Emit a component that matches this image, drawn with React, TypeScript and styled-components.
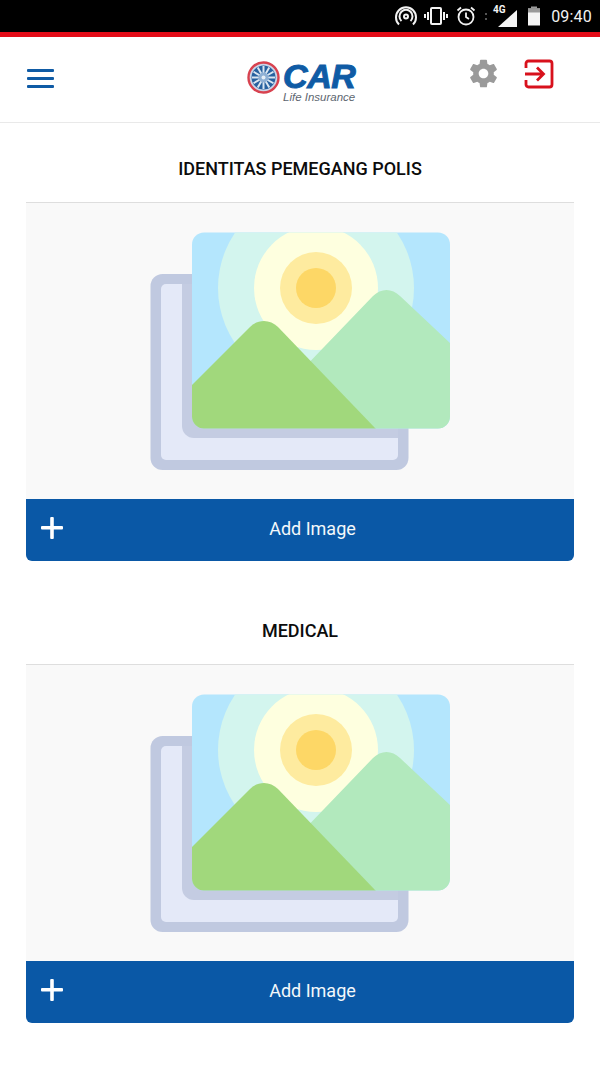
import React from 'react';
import styled, {createGlobalStyle} from 'styled-components';

const GlobalStyle = createGlobalStyle`
html, body {
  margin: 0;
  padding: 0;
  background: #fff;
  font-family: Roboto, "Liberation Sans", sans-serif;
}
* { box-sizing: border-box; }
`
const Page = styled.div`
width: 600px;
height: 1067px;
overflow: hidden;
background: #fff;
`
const StatusBar = styled.div`
height: 32px;
background: #000;
display: flex;
align-items: center;
justify-content: flex-end;
padding-right: 8px;
color: #fff;
`
const StatusTime = styled.span`
font-size: 16px;
letter-spacing: 0.2px;
margin-left: 11px;
color: #f2f2f2;
`
const RedLine = styled.div`
height: 5px;
background: #e30b17;
`
const Header = styled.header`
height: 86px;
display: flex;
align-items: flex-start;
padding: 0 46px 0 27px;
border-bottom: 1px solid #e9e9e9;
`
const Burger = styled.div`
width: 27px;
margin-top: 32px;
display: flex;
flex-direction: column;
gap: 5px;
> span {
  display: block;
  height: 3px;
  background: #0f5ba5;
  border-radius: 1px;
}
`
const Logo = styled.div`
margin-left: 193px;
margin-top: 24px;
display: flex;
align-items: flex-start;
`
const LogoText = styled.div`
margin-left: 3px;
display: flex;
flex-direction: column;
align-items: flex-end;
`
const LogoCar = styled.span`
font-family: "Liberation Sans", sans-serif;
font-style: italic;
font-weight: 700;
font-size: 34px;
line-height: 30px;
color: #0f5ba5;
letter-spacing: -0.5px;
-webkit-text-stroke: 1px #0f5ba5;
`
const LogoSub = styled.span`
font-family: "Liberation Sans", sans-serif;
font-style: italic;
font-size: 11.5px;
line-height: 12px;
color: #5d6670;
`
const Actions = styled.div`
margin-left: auto;
margin-top: 20px;
display: flex;
gap: 24px;
align-items: center;
`
const Section = styled.section`
padding: 0 26px;
height: 462px;
`
const Title = styled.h2`
margin: 0;
height: 80px;
display: flex;
align-items: center;
justify-content: center;
padding-top: 12px;
font-size: 18px;
font-weight: 500;
color: #0c0c0c;
border-bottom: 1px solid #dedede;
`
const Preview = styled.div`
height: 296px;
background: #f9f9f9;
padding-top: 29px;
display: flex;
justify-content: center;
`
const AddButton = styled.div`
height: 62px;
background: #0a58a6;
border-radius: 0 0 6px 6px;
display: flex;
align-items: center;
padding: 0 12px 4px 15px;
color: #fff;
`
const AddLabel = styled.span`
flex: 1;
text-align: center;
font-size: 18px;
color: #f4f8fb;
`

const Wheel = () => (
  <svg width="33" height="33" viewBox="0 0 33 33">
    <circle cx="16.5" cy="16.5" r="15" fill="#c9d6e8" stroke="#d8424f" strokeWidth="2.4"/>
    <circle cx="16.5" cy="16.5" r="12" fill="#27619f"/>
    {[0, 30, 60, 90, 120, 150].map(a => (
      <line key={a} x1="16.5" y1="5" x2="16.5" y2="28" stroke="#dbe6f1" strokeWidth="2" transform={`rotate(${a} 16.5 16.5)`}/>
    ))}
    <circle cx="16.5" cy="16.5" r="5" fill="#8fb0d4"/>
    <circle cx="16.5" cy="16.5" r="2" fill="#e6eef6"/>
  </svg>
)

const Gear = () => (
  <svg width="33" height="33" viewBox="0 0 24 24" fill="#9a9a9a">
    <path d="M19.43 12.98c.04-.32.07-.64.07-.98s-.03-.66-.07-.98l2.11-1.65c.19-.15.24-.42.12-.64l-2-3.46c-.12-.22-.39-.3-.61-.22l-2.49 1c-.52-.4-1.08-.73-1.69-.98l-.38-2.65C14.46 2.18 14.25 2 14 2h-4c-.25 0-.46.18-.49.42l-.38 2.65c-.61.25-1.17.59-1.69.98l-2.49-1c-.23-.09-.49 0-.61.22l-2 3.46c-.13.22-.07.49.12.64l2.11 1.65c-.04.32-.07.65-.07.98s.03.66.07.98l-2.11 1.65c-.19.15-.24.42-.12.64l2 3.46c.12.22.39.3.61.22l2.49-1c.52.4 1.08.73 1.69.98l.38 2.65c.03.24.24.42.49.42h4c.25 0 .46-.18.49-.42l.38-2.65c.61-.25 1.17-.59 1.69-.98l2.49 1c.23.09.49 0 .61-.22l2-3.46c.12-.22.07-.49-.12-.64l-2.11-1.65zM12 15.5c-1.93 0-3.5-1.57-3.5-3.5s1.57-3.5 3.5-3.5 3.5 1.57 3.5 3.5-1.57 3.5-3.5 3.5z"/>
  </svg>
)

const Exit = () => (
  <svg width="30" height="30" viewBox="0 0 30 30" fill="none" stroke="#d8111c" strokeWidth="2.8">
    <path d="M2 9V4.5C2 3 3 2 4.5 2h21C27 2 28 3 28 4.5v21c0 1.5-1 2.500-2.500 2.500h-21C3 28 2 27 2 25.500V21"/>
    <path d="M1 15h18M13 8.500l6.500 6.500-6.500 6.500"/>
  </svg>
)

const Plus = () => (
  <svg width="22" height="22" viewBox="0 0 22 22" fill="#fff">
    <rect x="0" y="9" width="22" height="3.600" rx="1"/>
    <rect x="9.200" y="0" width="3.600" height="22" rx="1"/>
  </svg>
)

const Photos = ({id}: { id: string }) => (
  <svg width="300" height="238" viewBox="150 232 300 238">
    <defs>
      <clipPath id={id}>
        <rect x="192" y="232.500" width="258" height="196" rx="12"/>
      </clipPath>
    </defs>
    <rect x="150.500" y="274" width="258" height="196" rx="12" fill="#c0c9e0"/>
    <rect x="161" y="284" width="237" height="176" rx="5" fill="#e4e9f8"/>
    <path d="M182 284h216v154H194a12 12 0 0 1-12-12z" fill="#c4cce2"/>
    <g clipPath={`url(#${id})`}>
      <rect x="192" y="232" width="258" height="197" fill="#b4e6fd"/>
      <circle cx="316" cy="288" r="98" fill="#d3f5ee"/>
      <circle cx="316" cy="288" r="62" fill="#feffdf"/>
      <circle cx="316" cy="288" r="36" fill="#feeb9f"/>
      <circle cx="316" cy="288" r="20" fill="#fdd766"/>
      <path d="M300 372l73-76c8-8 19-8 27 0l50 47v86H376z" fill="#b2e9bd"/>
      <path d="M192 385l58-58c8-8 20-8 28 0l98 102H192z" fill="#a1d87c"/>
    </g>
  </svg>
)

const StatusIcons = () => (
  <>
    <svg width="22" height="20" viewBox="0 0 22 20" fill="none" stroke="#f2f2f2" strokeWidth="2">
      <circle cx="11" cy="10.500" r="2"/>
      <path d="M6.500 15a6.500 6.500 0 1 1 9 0"/>
      <path d="M4 18.500a10 10 0 1 1 14 0"/>
    </svg>
    <svg style={{marginLeft: 7}} width="24" height="20" viewBox="0 0 24 20" fill="none" stroke="#f2f2f2" strokeWidth="2">
      <rect x="7" y="2" width="10" height="16" rx="1"/>
      <path d="M4 6v8M1 8v4M20 6v8M23 8v4"/>
    </svg>
    <svg style={{marginLeft: 8}} width="20" height="20" viewBox="0 0 20 20" fill="none" stroke="#f2f2f2" strokeWidth="1.800">
      <circle cx="10" cy="11" r="7.500"/>
      <path d="M10 6.500V11l3 2M1.500 4.500L5 1.500M18.500 4.500L15 1.500"/>
    </svg>
    <svg style={{marginLeft: 9}} width="36" height="24" viewBox="0 0 36 24">
      <rect x="0" y="9" width="2" height="2" fill="#555"/>
      <rect x="0" y="14" width="2" height="2" fill="#555"/>
      <path d="M32 6v17H13z" fill="#f4f4f4"/>
      <text x="8" y="9" fontFamily="Roboto, sans-serif" fontWeight="700" fontSize="10" fill="#f4f4f4">4G</text>
    </svg>
    <svg style={{marginLeft: 7}} width="12" height="20" viewBox="0 0 12 20">
      <rect x="0" y="2.500" width="12" height="17" fill="#f4f4f4"/>
      <rect x="3" y="0.500" width="6" height="2" fill="#999"/>
      <rect x="0" y="2.500" width="12" height="4" fill="#999"/>
    </svg>
  </>
)

function PhotoSection({title, id}: { title: string, id: string }) {
  return (
    <Section>
      <Title>{title}</Title>
      <Preview><Photos id={id}/></Preview>
      <AddButton>
        <Plus/>
        <AddLabel>Add Image</AddLabel>
      </AddButton>
    </Section>
  )
}

export default function App() {
  return (
    <Page>
      <GlobalStyle/>
      <StatusBar>
        <StatusIcons/>
        <StatusTime>09:40</StatusTime>
      </StatusBar>
      <RedLine/>
      <Header>
        <Burger><span/><span/><span/></Burger>
        <Logo>
          <Wheel/>
          <LogoText>
            <LogoCar>CAR</LogoCar>
            <LogoSub>Life Insurance</LogoSub>
          </LogoText>
        </Logo>
        <Actions>
          <Gear/>
          <Exit/>
        </Actions>
      </Header>
      <PhotoSection title="IDENTITAS PEMEGANG POLIS" id="clip-a"/>
      <PhotoSection title="MEDICAL" id="clip-b"/>
    </Page>
  )
}
